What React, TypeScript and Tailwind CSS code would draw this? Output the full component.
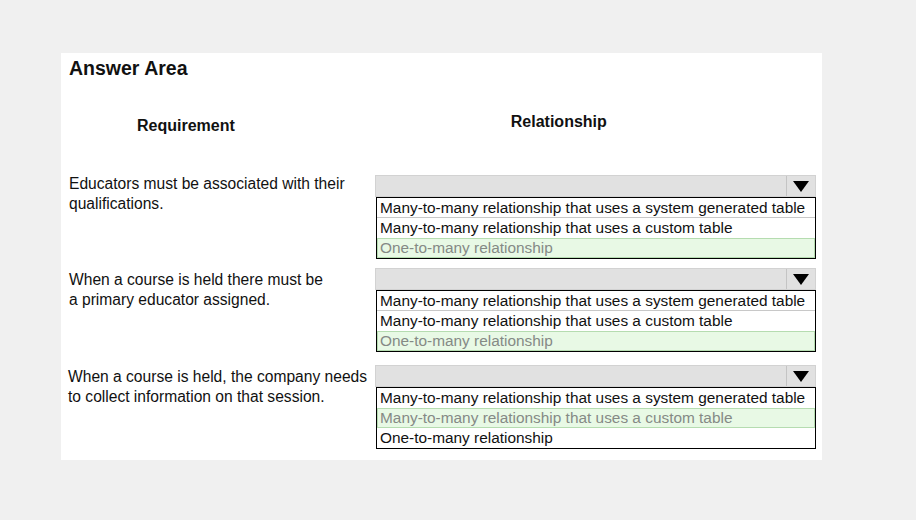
import React from "react";

const OPTIONS = [
  "Many-to-many relationship that uses a system generated table",
  "Many-to-many relationship that uses a custom table",
  "One-to-many relationship",
];

const ROWS = [
  {
    lines: ["Educators must be associated with their", "qualifications."],
    selected: 2,
    mt: "mt-[39px]",
    textMt: "mt-[-1px]",
    textMl: "ml-[8px]",
  },
  {
    lines: ["When a course is held there must be", "a primary educator assigned."],
    selected: 2,
    mt: "mt-[9px]",
    textMt: "mt-[2px]",
    textMl: "ml-[8px]",
  },
  {
    lines: ["When a course is held, the company needs", "to collect information on that session."],
    selected: 1,
    mt: "mt-[13px]",
    textMt: "mt-[2px]",
    textMl: "ml-[7px]",
  },
];

function Dropdown({ selected }: { selected: number }) {
  return (
    <div className="w-[441px]">
      <div className="flex h-[22px] justify-end border border-[#d2d2d2] bg-[#e1e1e1]">
        <div className="flex w-[29px] items-center justify-center border-l border-[#c4c4c4]">
          <svg width="16" height="11" viewBox="0 0 16 11">
            <path d="M0 0 L16 0 L8 11 Z" fill="#000" />
          </svg>
        </div>
      </div>
      <div className="ml-[1px] border border-black bg-white">
        {OPTIONS.map((opt, i) => {
          const isSel = i === selected;
          return (
            <div
              key={i}
              className={
                isSel
                  ? "h-[20px] whitespace-nowrap border border-[#b5dcb0] bg-[#e8f9e5] pl-[2px] text-[15.4px] leading-[18px] text-[#858a85]"
                  : i < OPTIONS.length - 1 && i + 1 !== selected
                  ? "h-[20px] whitespace-nowrap border-b border-[#c8c8c8] pl-[3px] text-[15.4px] leading-[19px] text-[#111]"
                  : "h-[20px] whitespace-nowrap pl-[3px] text-[15.4px] leading-[20px] text-[#111]"
              }
            >
              {opt}
            </div>
          );
        })}
      </div>
    </div>
  );
}

export default function App() {
  return (
    <div
      className="h-[520px] w-[916px] bg-[#f0f0f0] pt-[53px]"
      style={{ fontFamily: '"Liberation Sans", Arial, sans-serif' }}
    >
      <div className="ml-[61px] h-[407px] w-[761px] bg-white pt-[4px]">
        <div className="ml-[8px] text-[19.5px] font-bold leading-[22px] text-[#111]">
          Answer Area
        </div>
        <div className="flex">
          <div className="ml-[76px] mt-[37px] text-[16px] font-bold leading-[20px] text-[#111]">
            Requirement
          </div>
          <div className="ml-[276px] mt-[33px] text-[16px] font-bold leading-[20px] text-[#111]">
            Relationship
          </div>
        </div>
        {ROWS.map((row, idx) => (
          <div key={idx} className={`flex ${row.mt}`}>
            <div className={`w-[306px] ${row.textMt}`}>
              <div className={`${row.textMl} whitespace-nowrap text-[15.6px] leading-[20px] text-[#111]`}>
                {row.lines.map((l, j) => (
                  <div key={j}>{l}</div>
                ))}
              </div>
            </div>
            <div className="ml-[8px]">
              <Dropdown selected={row.selected} />
            </div>
          </div>
        ))}
      </div>
    </div>
  );
}
